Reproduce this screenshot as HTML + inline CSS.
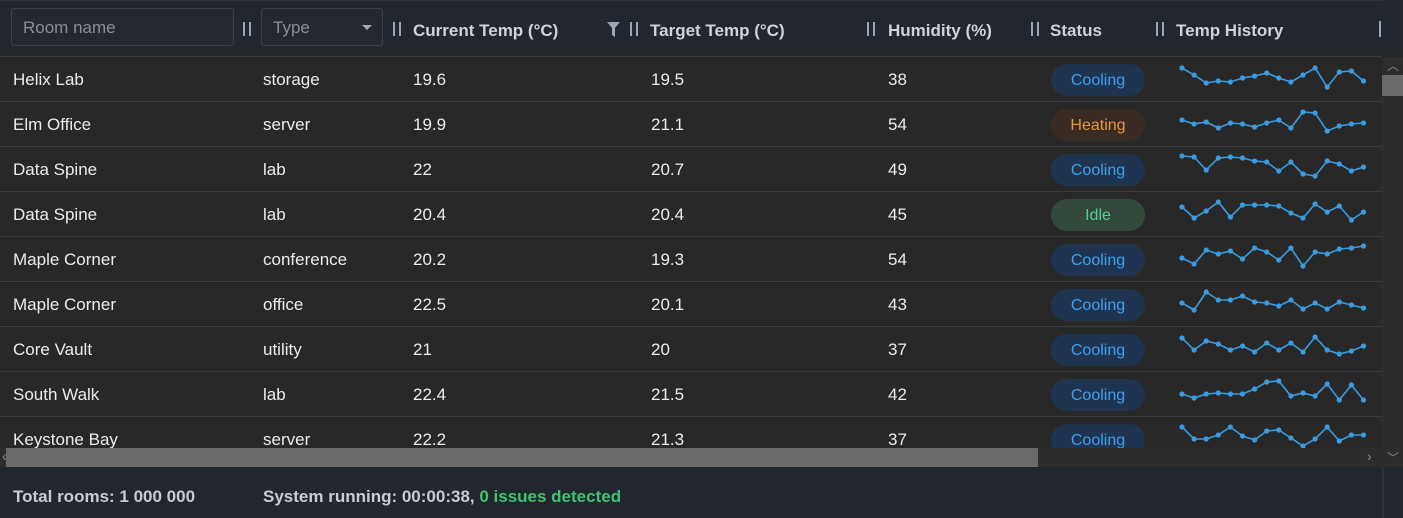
<!DOCTYPE html>
<html><head><meta charset="utf-8"><style>
*{box-sizing:border-box;margin:0;padding:0}
body{width:1403px;height:518px;background:#22262e;font-family:"Liberation Sans",sans-serif;position:relative;overflow:hidden;color:#e6e6e6}
.hdr{position:absolute;left:0;top:0;width:1382px;height:57px;background:#22262e;border-bottom:1px solid #3a3d42;border-top:1px solid #30343a}
.ht{position:absolute;top:20px;font-size:17px;font-weight:bold;color:#cfd3d8}
.grip{position:absolute;top:21px;width:8px;height:14px;border-left:2px solid #9aa6b4;border-right:2px solid #9aa6b4}
.inp{position:absolute;top:7px;height:38px;border:1px solid #3c4047;border-radius:3px;background:#25292f;color:#8a8f96;font-size:17px;padding:9px 11px}
.body{position:absolute;left:0;top:57px;width:1382px;height:391px;background:#282828;overflow:hidden}
.row{position:absolute;left:0;width:1382px;height:45px;border-bottom:1px solid #3a3b3d;font-size:17px;color:#ececec}
.row span{position:absolute;top:13px}
.b{position:absolute;left:1051px;top:7px;width:94px;height:32px;border-radius:16px;text-align:center;line-height:34px;font-size:16px}
.c{background:#1f3450;color:#3ea0f0}.h{background:#3a2c24;color:#e7953a}.i{background:#33493c;color:#55d08a}
.vs{position:absolute;left:1382px;top:57px;width:21px;height:410px;background:#2d2d2d}
.hs{position:absolute;left:0;top:448px;width:1382px;height:19px;background:#2d2d2d}
.ft{position:absolute;top:487px;font-size:17px;font-weight:bold;color:#c8ccd2}
</style></head><body>
<div class="hdr">
<div class="inp" style="left:11px;width:223px">Room name</div>
<div class="grip" style="left:243px"></div>
<div class="inp" style="left:261px;width:122px">Type<span style="position:absolute;right:10px;top:16px;border:5px solid transparent;border-top:5px solid #aaa"></span></div>
<div class="grip" style="left:393px"></div><div class="ht" style="left:413px">Current Temp (°C)</div>
<svg style="position:absolute;left:607px;top:21px" width="14" height="16"><path d="M0 0H13L8 6V15L5 13V6Z" fill="#9aa6b4"/></svg>
<div class="grip" style="left:630px"></div><div class="ht" style="left:650px">Target Temp (°C)</div>
<div class="grip" style="left:867px"></div><div class="ht" style="left:888px">Humidity (%)</div>
<div class="grip" style="left:1031px"></div><div class="ht" style="left:1050px">Status</div>
<div class="grip" style="left:1156px"></div><div class="ht" style="left:1176px">Temp History</div>
<div style="position:absolute;left:1379px;top:20px;width:2px;height:16px;background:#9aa6b4"></div>
</div>
<div class="body">
<div class="row" style="top:0"><span style="left:13px">Helix Lab</span><span style="left:263px">storage</span><span style="left:413px">19.6</span><span style="left:651px">19.5</span><span style="left:888px">38</span><div class="b c">Cooling</div></div>
<div class="row" style="top:45px"><span style="left:13px">Elm Office</span><span style="left:263px">server</span><span style="left:413px">19.9</span><span style="left:651px">21.1</span><span style="left:888px">54</span><div class="b h">Heating</div></div>
<div class="row" style="top:90px"><span style="left:13px">Data Spine</span><span style="left:263px">lab</span><span style="left:413px">22</span><span style="left:651px">20.7</span><span style="left:888px">49</span><div class="b c">Cooling</div></div>
<div class="row" style="top:135px"><span style="left:13px">Data Spine</span><span style="left:263px">lab</span><span style="left:413px">20.4</span><span style="left:651px">20.4</span><span style="left:888px">45</span><div class="b i">Idle</div></div>
<div class="row" style="top:180px"><span style="left:13px">Maple Corner</span><span style="left:263px">conference</span><span style="left:413px">20.2</span><span style="left:651px">19.3</span><span style="left:888px">54</span><div class="b c">Cooling</div></div>
<div class="row" style="top:225px"><span style="left:13px">Maple Corner</span><span style="left:263px">office</span><span style="left:413px">22.5</span><span style="left:651px">20.1</span><span style="left:888px">43</span><div class="b c">Cooling</div></div>
<div class="row" style="top:270px"><span style="left:13px">Core Vault</span><span style="left:263px">utility</span><span style="left:413px">21</span><span style="left:651px">20</span><span style="left:888px">37</span><div class="b c">Cooling</div></div>
<div class="row" style="top:315px"><span style="left:13px">South Walk</span><span style="left:263px">lab</span><span style="left:413px">22.4</span><span style="left:651px">21.5</span><span style="left:888px">42</span><div class="b c">Cooling</div></div>
<div class="row" style="top:360px"><span style="left:13px">Keystone Bay</span><span style="left:263px">server</span><span style="left:413px">22.2</span><span style="left:651px">21.3</span><span style="left:888px">37</span><div class="b c">Cooling</div></div>
<svg id="sp" style="position:absolute;left:0;top:-57px" width="1382" height="448" fill="#3a9be0" stroke="#3a9be0"></svg>
</div>
<div class="hs"><div style="position:absolute;left:6px;top:0;width:1032px;height:19px;background:#6a6a6a"></div><span style="position:absolute;left:2px;top:0;color:#888;font-size:14px">‹</span><span style="position:absolute;left:1367px;top:0;color:#888;font-size:14px">›</span></div>
<div class="vs"><div style="position:absolute;left:0;top:18px;width:21px;height:21px;background:#6a6a6a"></div><span style="position:absolute;left:5px;top:0;color:#888;font-size:12px">︿</span><span style="position:absolute;left:5px;top:392px;color:#888;font-size:12px">﹀</span></div>
<div style="position:absolute;left:1382px;top:467px;width:2px;height:51px;background:#2f3339"></div>
<div class="ft" style="left:13px">Total rooms: 1 000 000</div>
<div class="ft" style="left:263px">System running: 00:00:38, <span style="color:#3ec46f">0 issues detected</span></div>
<script>
var d=[[68,75,83,81,82,78,76,73,78,82,75,68,87,72,71,81],[120,124,122,128,123,124,127,123,120,128,112,113,131,126,124,123],[156,157,170,158,157,158,161,162,171,162,174,176,161,164,171,167],[207,218,211,202,217,205,205,205,206,213,218,204,212,206,220,212],[258,264,250,254,251,259,248,252,260,248,266,252,254,249,248,246],[303,310,292,300,300,296,302,303,306,300,309,303,309,302,305,308],[338,350,341,344,350,346,352,343,350,343,352,337,350,354,351,346],[394,398,394,393,394,394,389,382,381,396,393,396,384,400,385,400],[427,439,439,435,427,436,440,431,430,438,446,439,427,441,435,435]];
var s='';d.forEach(function(r){var p=r.map(function(y,i){return (1182+i*12.1).toFixed(1)+','+y}).join(' ');s+='<polyline points="'+p+'" fill="none" stroke-width="1.6"/>';r.forEach(function(y,i){s+='<circle cx="'+(1182+i*12.1)+'" cy="'+y+'" r="2.6" stroke="none"/>'})});
document.getElementById('sp').innerHTML=s;
</script>
</body></html>
